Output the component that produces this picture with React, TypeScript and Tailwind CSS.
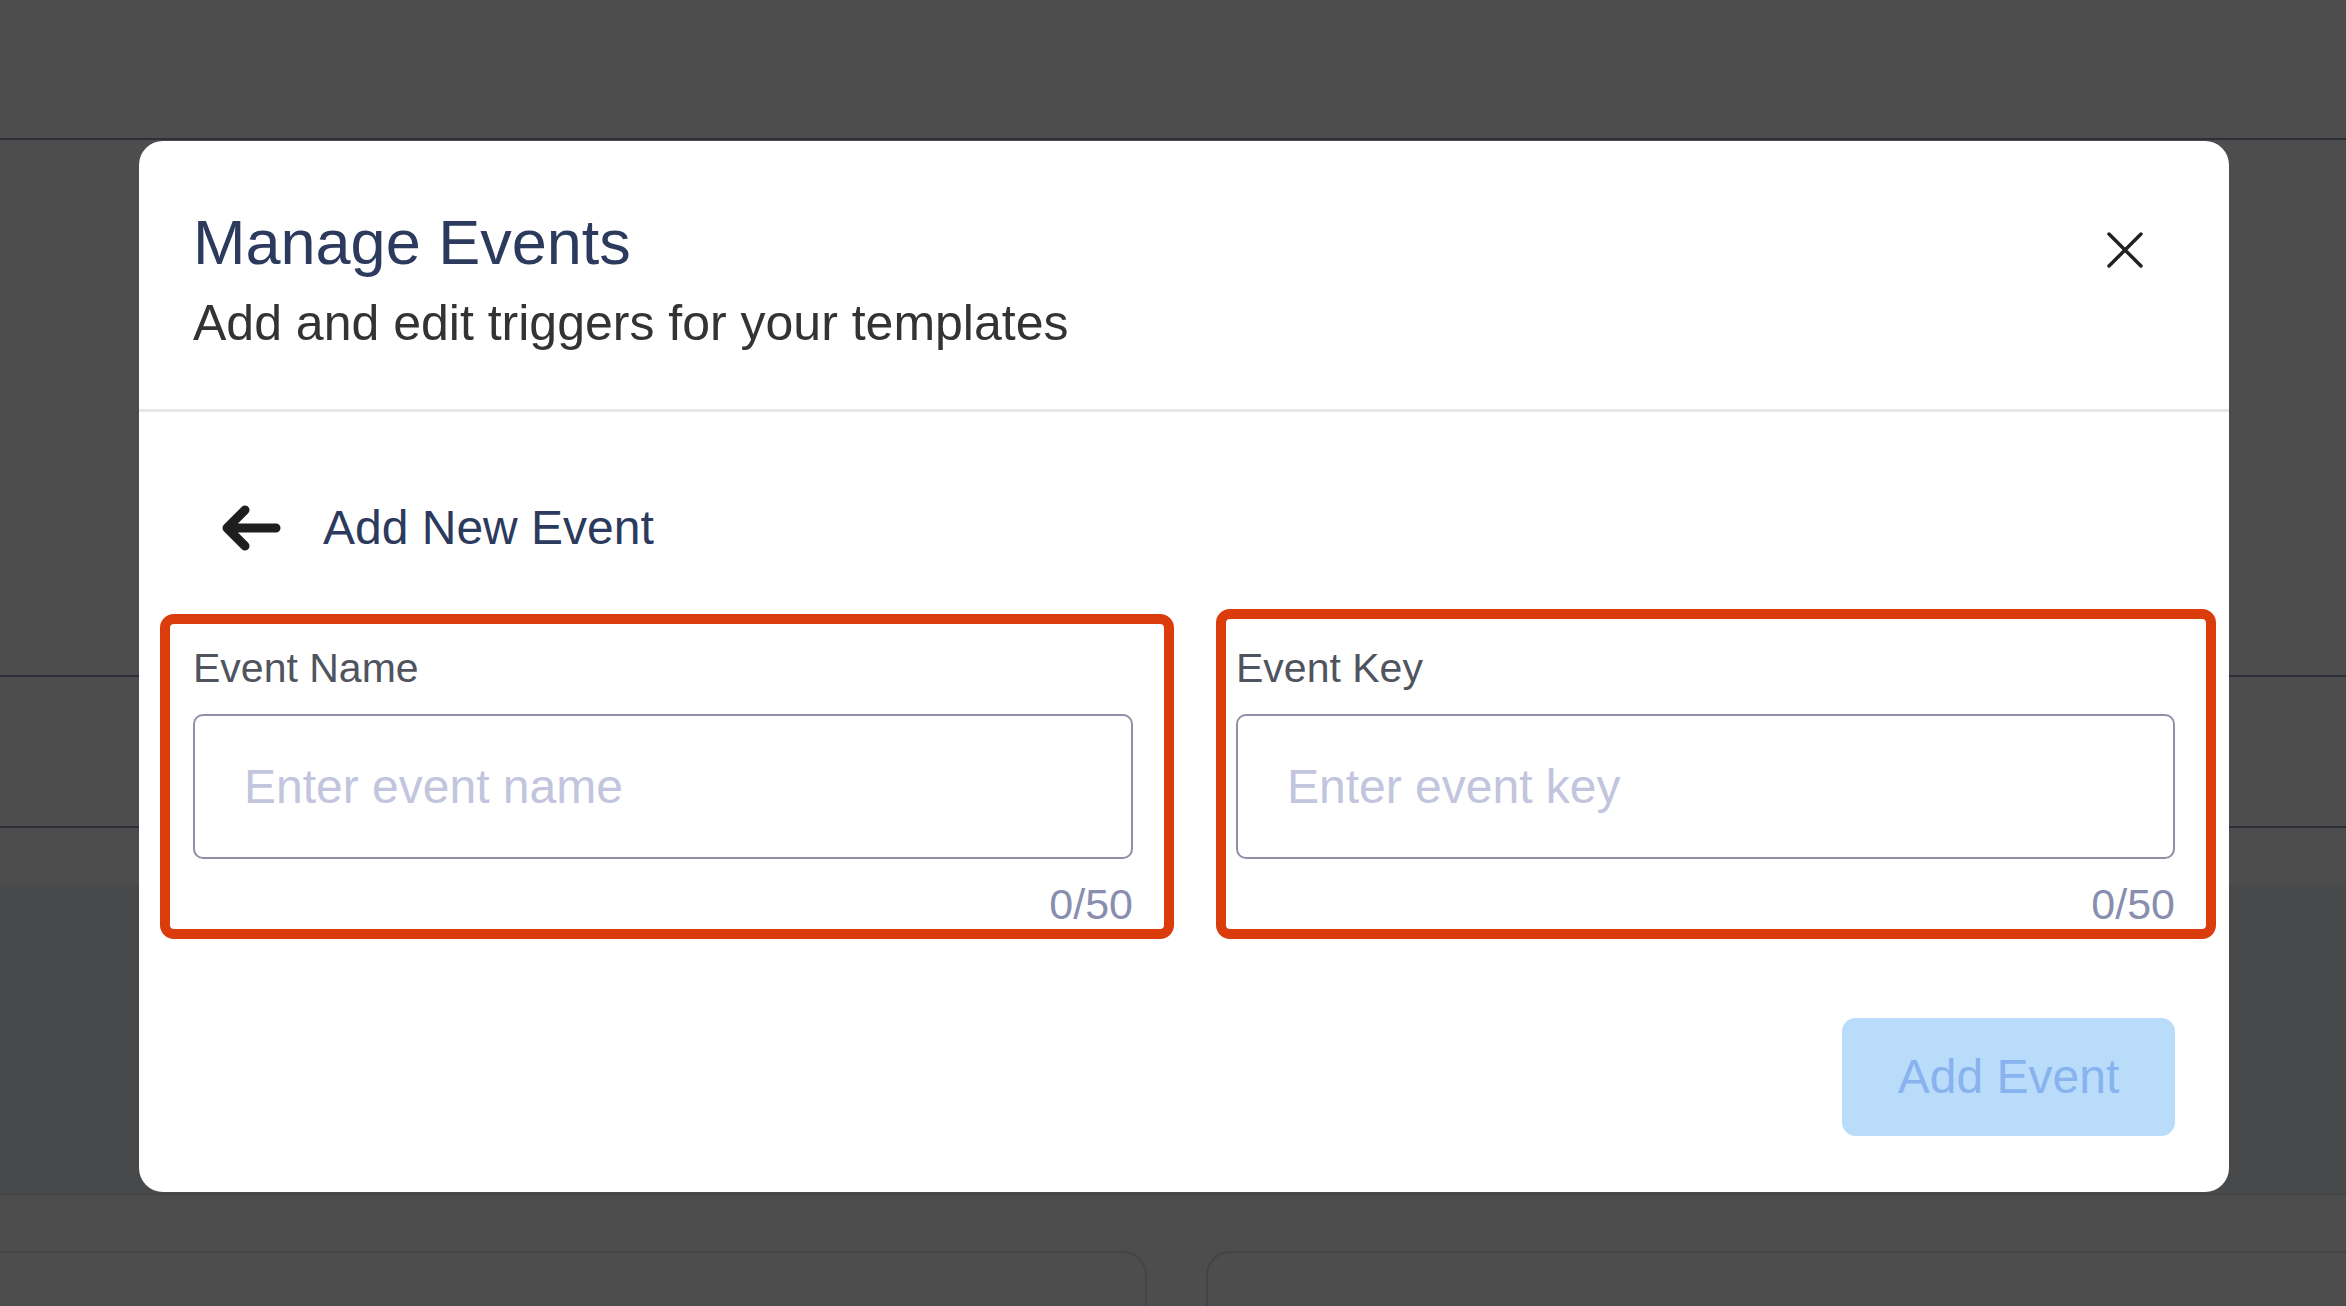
import React from "react";

function Field({ label, placeholder, box }: { label: string; placeholder: string; box: string }) {
  return (
    <div className="relative flex flex-col">
      <div className={"pointer-events-none absolute rounded-[14px] border-[10px] border-[#da3c0c] " + box} />
      <label className="text-[41px] leading-[40px] text-[#4f545e]">{label}</label>
      <input
        className="mt-[26px] h-[145px] w-full rounded-[10px] border-2 border-[#8e91a6] bg-white pl-[49px] text-[48px] text-[#333] outline-none placeholder:text-[#c2c5dd]"
        placeholder={placeholder}
      />
      <div className="mt-[24px] text-right text-[43px] leading-[43px] text-[#8a8eae]">0/50</div>
    </div>
  );
}

export default function App() {
  return (
    <div
      className="relative h-[1306px] w-[2346px] overflow-hidden bg-[#4d4d4d]"
      style={{ fontFamily: '"Liberation Sans", Arial, Helvetica, sans-serif' }}
    >
      {/* background page behind overlay */}
      <div className="flex h-full flex-col">
        <div className="h-[138px]" />
        <div className="h-[2px] bg-[#2e3039]" />
        <div className="h-[535px]" />
        <div className="h-[2px] bg-[#2e3039]" />
        <div className="h-[149px]" />
        <div className="h-[2px] bg-[#2e3039]" />
        <div className="h-[57px]" />
        <div className="h-[308px] bg-[#48494a]" />
        <div className="h-[2px] bg-[#444546]" />
        <div className="h-[56px]" />
        <div className="flex flex-1 gap-[59px]">
          <div className="w-[1147px] rounded-tr-[24px] border-r-2 border-t-2 border-[#434445]" />
          <div className="flex-1 rounded-tl-[24px] border-l-2 border-t-2 border-[#434445]" />
        </div>
      </div>

      {/* modal */}
      <div className="absolute left-[139px] top-[141px] flex h-[1051px] w-[2090px] flex-col rounded-[24px] bg-white">
        <div className="flex items-start justify-between pb-[61px] pl-[54px] pr-[86px] pt-[70px]">
          <div className="flex flex-col">
            <h1 className="text-[63px] leading-[63px] text-[#2b3a5d]">Manage Events</h1>
            <p className="mt-[24px] text-[50px] leading-[50px] text-[#333333]">
              Add and edit triggers for your templates
            </p>
          </div>
          <button className="mt-[21px] flex h-[36px] w-[36px] items-center justify-center">
            <svg width="36" height="36" viewBox="0 0 36 36" fill="none">
              <path d="M2 2 L34 34 M34 2 L2 34" stroke="#222" strokeWidth="3.5" strokeLinecap="round" />
            </svg>
          </button>
        </div>
        <div className="h-[3px] bg-[#e7e7e7]" />

        <div className="flex flex-col px-[54px]">
          <div className="mt-[92px] flex h-[48px] items-center">
            <svg className="ml-[26px]" width="62" height="50" viewBox="0 0 62 50" fill="none">
              <path
                d="M57 25 H8 M26 7 L8 25 L26 43"
                stroke="#1e1e1e"
                strokeWidth="9"
                strokeLinecap="round"
                strokeLinejoin="round"
              />
            </svg>
            <span className="ml-[42px] text-[48px] leading-[48px] text-[#2b3a5d]">Add New Event</span>
          </div>

          <div className="mt-[96px] grid grid-cols-[940px_939px] gap-x-[103px]">
            <Field
              label="Event Name"
              placeholder="Enter event name"
              box="-left-[33px] -right-[41px] -top-[34px] -bottom-[13px]"
            />
            <Field
              label="Event Key"
              placeholder="Enter event key"
              box="-left-[20px] -right-[41px] -top-[39px] -bottom-[13px]"
            />
          </div>

          <div className="mt-[92px] flex justify-end">
            <button className="h-[118px] w-[333px] rounded-[14px] bg-[#b9dcfb] text-[48px] text-[#88b3ee]">
              Add Event
            </button>
          </div>
        </div>
      </div>
    </div>
  );
}
